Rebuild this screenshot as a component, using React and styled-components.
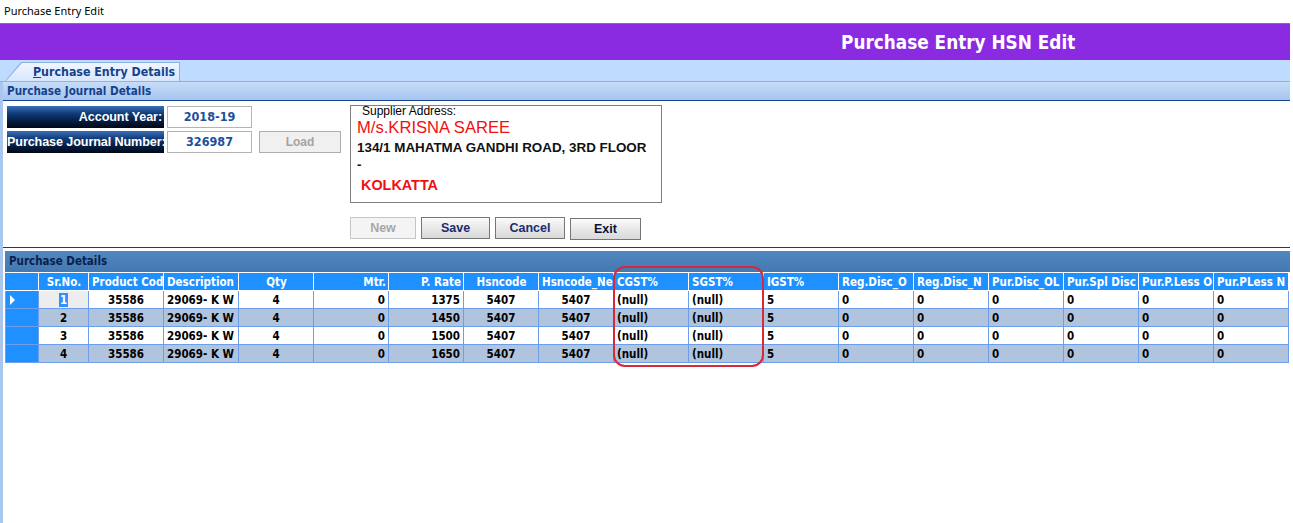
import React from 'react';
import styled, { createGlobalStyle } from 'styled-components';

const GlobalStyle = createGlobalStyle`
    html, body {
        margin: 0;
        padding: 0;
        background: #ffffff;
    }
    body {
        width: 1293px;
        height: 523px;
        overflow: hidden;
        font-family: 'Liberation Sans', Arial, sans-serif;
    }
`;

const tahoma = `'DejaVu Sans Condensed', 'DejaVu Sans', Tahoma, sans-serif`;
const arial = `'Liberation Sans', Arial, sans-serif`;

const columns = [
    { title: 'Sr.No.', width: 50, align: 'center', head: 'center' },
    { title: 'Product Cod', width: 75, align: 'center', head: 'left' },
    { title: 'Description', width: 75, align: 'left', head: 'left' },
    { title: 'Qty', width: 75, align: 'center', head: 'center' },
    { title: 'Mtr.', width: 75, align: 'right', head: 'right' },
    { title: 'P. Rate', width: 75, align: 'right', head: 'right' },
    { title: 'Hsncode', width: 75, align: 'center', head: 'center' },
    { title: 'Hsncode_Ne', width: 75, align: 'center', head: 'left' },
    { title: 'CGST%', width: 75, align: 'left', head: 'left' },
    { title: 'SGST%', width: 75, align: 'left', head: 'left' },
    { title: 'IGST%', width: 75, align: 'left', head: 'left' },
    { title: 'Reg.Disc_O', width: 75, align: 'left', head: 'left' },
    { title: 'Reg.Disc_N', width: 75, align: 'left', head: 'left' },
    { title: 'Pur.Disc_OL', width: 75, align: 'left', head: 'left' },
    { title: 'Pur.Spl Disc', width: 75, align: 'left', head: 'left' },
    { title: 'Pur.P.Less O', width: 75, align: 'left', head: 'left' },
    { title: 'Pur.PLess N', width: 75, align: 'left', head: 'left' },
];

const rates = ['1375', '1450', '1500', '1650'];
const rows = rates.map((rate, i) => [
    String(i + 1), '35586', '29069- K W', '4', '0', rate, '5407', '5407',
    '(null)', '(null)', '5', '0', '0', '0', '0', '0', '0',
]);

const App = () => {
    return (
        <>
            <GlobalStyle />
            <Window>
                <TitleBar>Purchase Entry Edit</TitleBar>
                <Banner>
                    <BannerTitle>Purchase Entry HSN Edit</BannerTitle>
                </Banner>
                <TabStrip>
                    <TabEdge>
                        <Tab>
                            <u>P</u>urchase Entry Details
                        </Tab>
                    </TabEdge>
                </TabStrip>
                <Panel>
                    <SectionHeader>Purchase Journal Details</SectionHeader>
                    <FormArea>
                        <Fields>
                            <FieldRow>
                                <FieldLabel>Account Year:</FieldLabel>
                                <ValueBox>2018-19</ValueBox>
                            </FieldRow>
                            <FieldRow>
                                <FieldLabel>Purchase Journal Number:</FieldLabel>
                                <ValueBox>326987</ValueBox>
                                <LoadButton disabled>Load</LoadButton>
                            </FieldRow>
                        </Fields>
                        <SupplierColumn>
                            <AddressBox>
                                <AddressCaption>Supplier Address:</AddressCaption>
                                <PartyName>M/s.KRISNA SAREE</PartyName>
                                <AddressLine>
                                    134/1 MAHATMA GANDHI ROAD, 3RD FLOOR
                                </AddressLine>
                                <AddressLine>-</AddressLine>
                                <City>KOLKATTA</City>
                            </AddressBox>
                            <ButtonBar>
                                <ActionButton $w={66} disabled>New</ActionButton>
                                <ActionButton $w={69}>Save</ActionButton>
                                <ActionButton $w={70}>Cancel</ActionButton>
                                <ActionButton $w={71} $drop={1} $dark>
                                    Exit
                                </ActionButton>
                            </ButtonBar>
                        </SupplierColumn>
                    </FormArea>
                    <Divider />
                    <GridWrap>
                        <GridCaption>Purchase Details</GridCaption>
                        <Grid>
                            <colgroup>
                                <col style={{ width: 33 }} />
                                {columns.map((c) => (
                                    <col key={c.title} style={{ width: c.width }} />
                                ))}
                            </colgroup>
                            <thead>
                                <tr>
                                    <CornerCell />
                                    {columns.map((c) => (
                                        <HeadCell key={c.title} $align={c.head}>
                                            {c.title}
                                        </HeadCell>
                                    ))}
                                </tr>
                            </thead>
                            <tbody>
                                {rows.map((row, r) => (
                                    <tr key={r}>
                                        <RowHeader>
                                            {r === 0 && <Pointer />}
                                        </RowHeader>
                                        {row.map((val, c) => (
                                            <DataCell
                                                key={c}
                                                $align={columns[c].align}
                                                $alt={r % 2 === 1}
                                                $current={r === 0 && c === 0}
                                            >
                                                {r === 0 && c === 0 ? (
                                                    <Selected>{val}</Selected>
                                                ) : (
                                                    val
                                                )}
                                            </DataCell>
                                        ))}
                                    </tr>
                                ))}
                            </tbody>
                        </Grid>
                        <Highlight />
                    </GridWrap>
                </Panel>
            </Window>
        </>
    );
};

const Window = styled.div`
    width: 1290px;
    height: 523px;
    display: flex;
    flex-direction: column;
`;

const TitleBar = styled.div`
    height: 23px;
    padding-left: 4px;
    font-family: 'Noto Sans', 'Open Sans', sans-serif;
    font-size: 11px;
    line-height: 22px;
    color: #000;
    background: #fff;
`;

const Banner = styled.div`
    height: 36px;
    border-top: 1px solid #7a7a7a;
    background: #8a2be2;
    display: flex;
    align-items: center;
    padding-left: 841px;
`;

const BannerTitle = styled.h1`
    margin: 0;
    font-family: ${tahoma};
    font-weight: 700;
    font-size: 18.8px;
    color: #fff;
`;

const TabStrip = styled.div`
    height: 21px;
    background: #bfdbff;
    border-bottom: 1px solid #8db2e3;
    display: flex;
    align-items: flex-end;
    padding-left: 5px;
`;

const TabEdge = styled.div`
    width: 175px;
    height: 19px;
    background: #8db2e3;
    clip-path: polygon(16px 0, 100% 0, 100% 100%, 0 100%);
    display: flex;
    padding: 1px 1px 0 1px;
    box-sizing: border-box;
`;

const Tab = styled.div`
    flex: 1;
    background: linear-gradient(#f0f6ff, #d7e7fd);
    clip-path: polygon(16px 0, 100% 0, 100% 100%, 0 100%);
    font-family: ${tahoma};
    font-weight: 700;
    font-size: 12.3px;
    color: #15428b;
    line-height: 18px;
    padding-left: 27px;
    white-space: nowrap;
`;

const Panel = styled.div`
    flex: 1;
    border-left: 3px solid #a9c6ee;
    display: flex;
    flex-direction: column;
    background: #fff;
`;

const SectionHeader = styled.div`
    height: 18px;
    background: linear-gradient(#c7ddf8, #a6c4ef);
    border-bottom: 1px solid #15428b;
    font-family: ${tahoma};
    font-weight: 700;
    font-size: 11.6px;
    color: #15428b;
    line-height: 18px;
    padding-left: 4px;
`;

const FormArea = styled.div`
    height: 146px;
    display: flex;
    padding: 4px 0 0 4px;
    box-sizing: border-box;
`;

const Fields = styled.div`
    width: 343px;
    padding-top: 1px;
    display: flex;
    flex-direction: column;
    gap: 3px;
`;

const FieldRow = styled.div`
    display: flex;
    gap: 3px;
    height: 22px;
`;

const FieldLabel = styled.div`
    width: 157px;
    background: linear-gradient(#3a6fb8 0%, #103b78 35%, #041c40 70%, #000814 100%);
    color: #fff;
    font-family: ${arial};
    font-weight: 700;
    font-size: 12.6px;
    letter-spacing: -0.1px;
    text-align: right;
    line-height: 22px;
    padding-right: 2px;
    box-sizing: border-box;
    white-space: nowrap;
`;

const ValueBox = styled.div`
    width: 85px;
    border: 1px solid #b4b4b4;
    box-sizing: border-box;
    font-family: ${tahoma};
    font-weight: 700;
    font-size: 12.5px;
    color: #1d4f9c;
    text-align: center;
    line-height: 20px;
`;

const LoadButton = styled.button`
    width: 82px;
    height: 22px;
    margin-left: 4px;
    border: 1px solid #adadad;
    background: #f0f0f0;
    font-family: ${arial};
    font-weight: 700;
    font-size: 12px;
    color: #a3a3a3;
    padding: 0;
`;

const SupplierColumn = styled.div`
    display: flex;
    flex-direction: column;
    gap: 14px;
`;

const AddressBox = styled.div`
    width: 312px;
    height: 98px;
    border: 1px solid #7f7f7f;
    box-sizing: border-box;
    padding: 0 0 0 6px;
    font-family: ${arial};
`;

const AddressCaption = styled.div`
    font-size: 12px;
    line-height: 11px;
    padding: 0 0 0 5px;
    color: #000;
`;

const PartyName = styled.div`
    font-size: 16.6px;
    color: #f01010;
    line-height: 22px;
`;

const AddressLine = styled.div`
    font-size: 13.4px;
    font-weight: 700;
    color: #111;
    line-height: 17px;
`;

const City = styled.div`
    font-size: 14.4px;
    font-weight: 700;
    color: #f01010;
    line-height: 18px;
    padding: 3px 0 0 4px;
`;

const ButtonBar = styled.div`
    display: flex;
    gap: 5px;
`;

const ActionButton = styled.button`
    width: ${(p) => p.$w}px;
    height: 22px;
    margin-top: ${(p) => p.$drop || 0}px;
    padding: 0;
    border: 1px solid ${(p) => (p.disabled ? '#c6c6c6' : '#767676')};
    background: ${(p) =>
        p.disabled ? '#f4f4f4' : 'linear-gradient(#fbfbfb, #e8e8e8 50%, #d9d9d9)'};
    font-family: ${arial};
    font-weight: 700;
    font-size: 12.5px;
    color: ${(p) => (p.disabled ? '#a8a8a8' : p.$dark ? '#0a1438' : '#1b2c70')};
`;

const Divider = styled.div`
    height: 1px;
    background: #1b3a6e;
    margin-bottom: 3px;
`;

const GridWrap = styled.div`
    position: relative;
    margin-left: 2px;
`;

const GridCaption = styled.div`
    width: 1285px;
    height: 21px;
    background: linear-gradient(#5187c0, #4478b0);
    font-family: ${tahoma};
    font-weight: 700;
    font-size: 11.5px;
    color: #0a1f4c;
    line-height: 21px;
    padding-left: 4px;
    box-sizing: border-box;
`;

const Grid = styled.table`
    border-collapse: collapse;
    table-layout: fixed;
    width: 1283px;
    font-family: ${tahoma};
    font-weight: 700;
    font-size: 11.5px;
`;

const CornerCell = styled.th`
    height: 17px;
    background: #1e90ff;
    border: 1px solid #fff;
    border-left-color: #1e90ff;
    padding: 0;
`;

const HeadCell = styled.th`
    height: 17px;
    background: #1e90ff;
    color: #fff;
    border: 1px solid #fff;
    text-align: ${(p) => p.$align};
    padding: 0 2px 0 3px;
    white-space: nowrap;
    overflow: hidden;
    font-weight: 700;
`;

const RowHeader = styled.td`
    height: 17px;
    background: #1e90ff;
    border: 1px solid #6d9eeb;
    padding: 0 0 0 4px;
    vertical-align: middle;
`;

const Pointer = styled.span`
    display: block;
    width: 0;
    height: 0;
    border-top: 5px solid transparent;
    border-bottom: 5px solid transparent;
    border-left: 5px solid #fff;
`;

const DataCell = styled.td`
    height: 17px;
    padding: 0 3px;
    border: 1px solid #6d9eeb;
    background: ${(p) => (p.$current ? '#ededed' : p.$alt ? '#b0c4de' : '#fff')};
    color: #000;
    text-align: ${(p) => p.$align};
    white-space: nowrap;
    overflow: hidden;
    line-height: 16px;
`;

const Selected = styled.span`
    background: #3390ff;
    color: #fff;
    padding: 0 1px;
`;

const Highlight = styled.div`
    position: absolute;
    left: 608px;
    top: 15px;
    width: 151px;
    height: 101px;
    border: 2px solid #d42a3c;
    border-radius: 12px;
    box-sizing: border-box;
    pointer-events: none;
`;

export default App;
